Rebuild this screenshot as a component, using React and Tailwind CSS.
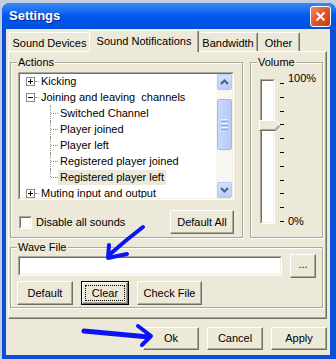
import React from 'react';

const rows = [
  { label: 'Kicking', level: 0, box: '+' },
  { label: 'Joining and leaving  channels', level: 0, box: '-' },
  { label: 'Switched Channel', level: 1 },
  { label: 'Player joined', level: 1 },
  { label: 'Player left', level: 1 },
  { label: 'Registered player joined', level: 1 },
  { label: 'Registered player left', level: 1, last: true, selected: true },
  { label: 'Muting input and output', level: 0, box: '+' },
];

function Sunken({ className = '', children }) {
  return (
    <div className={`border border-t-[#aca899] border-l-[#aca899] border-r-white border-b-white ${className}`}>
      <div className="h-full w-full border border-t-[#716f64] border-l-[#716f64] border-r-[#f1efe2] border-b-[#f1efe2] bg-white">
        {children}
      </div>
    </div>
  );
}

function Btn({ className = '', children }) {
  return (
    <div className={`flex items-center justify-center bg-[#ece9d8] border border-t-white border-l-white border-r-[#716f64] border-b-[#716f64] shadow-[inset_-1px_-1px_0_#aca899] ${className}`}>
      {children}
    </div>
  );
}

function Group({ label, className = '', children }) {
  return (
    <div className={`relative border border-[#aca899] shadow-[inset_1px_1px_0_#fff,1px_1px_0_#fff] ${className}`}>
      <span className="absolute left-[6px] top-[-8px] bg-[#ece9d8] px-[1px] leading-[14px]">{label}</span>
      {children}
    </div>
  );
}

function Expander({ sign }) {
  return (
    <svg width="9" height="9" viewBox="0 0 9 9" className="shrink-0">
      <rect x="0.5" y="0.5" width="8" height="8" fill="#fff" stroke="#8a8a8a" />
      <line x1="2" y1="4.5" x2="7" y2="4.5" stroke="#000" />
      {sign === '+' && <line x1="4.5" y1="2" x2="4.5" y2="7" stroke="#000" />}
    </svg>
  );
}

function TreeRow({ row }) {
  if (row.level === 0) {
    return (
      <div className="flex h-[16px] items-center">
        <div className="w-[6px]" />
        <Expander sign={row.box} />
        <div className="w-[4px] border-t border-dotted border-[#8f8f8f]" />
        <span className="whitespace-pre px-[2px] leading-[16px]">{row.label}</span>
      </div>
    );
  }
  return (
    <div className="flex h-[16px] items-center">
      <div className="w-[30px] self-stretch" />
      <div className={`w-[1px] border-l border-dotted border-[#8f8f8f] ${row.last ? 'h-[8px] self-start' : 'self-stretch'}`} />
      <div className="w-[7px] border-t border-dotted border-[#8f8f8f]" />
      <span className={`whitespace-pre px-[2px] leading-[15px] ${row.selected ? 'bg-[#ece9d8]' : ''}`}>{row.label}</span>
    </div>
  );
}

function ScrollBtn({ up }) {
  return (
    <div className="flex h-[16px] w-[15px] items-center justify-center rounded-[2px] border border-[#b6c9f5] bg-gradient-to-b from-[#d3e0fd] to-[#b9cdf8]">
      <svg width="9" height="6" viewBox="0 0 9 6">
        <polyline
          points={up ? '1,5 4.5,1.5 8,5' : '1,1 4.5,4.5 8,1'}
          fill="none"
          stroke="#4d6185"
          strokeWidth="2"
        />
      </svg>
    </div>
  );
}

function Scrollbar() {
  return (
    <div className="flex h-full w-[16px] flex-col items-end bg-[#f7f7f2]">
      <ScrollBtn up />
      <div className="mt-[9px] flex h-[51px] w-[15px] flex-col items-center justify-center gap-[1px] rounded-[2px] border border-[#9fb8ef] bg-gradient-to-r from-[#c9d8fc] to-[#b7cbf7]">
        <div className="h-[1px] w-[7px] bg-[#eef3fe]" />
        <div className="h-[1px] w-[7px] bg-[#8ca8e6]" />
        <div className="h-[1px] w-[7px] bg-[#eef3fe]" />
        <div className="h-[1px] w-[7px] bg-[#8ca8e6]" />
        <div className="h-[1px] w-[7px] bg-[#eef3fe]" />
        <div className="h-[1px] w-[7px] bg-[#8ca8e6]" />
      </div>
      <div className="mt-auto">
        <ScrollBtn />
      </div>
    </div>
  );
}

function Ticks() {
  const ticks = Array.from({ length: 11 });
  return (
    <div className="ml-[5px] mt-[12px] flex h-[139px] w-[4px] flex-col justify-between">
      {ticks.map((_, i) => (
        <div key={i} className="h-[1px] w-[4px] bg-black" />
      ))}
    </div>
  );
}

export default function App() {
  return (
    <div className="relative h-[359px] w-[336px] overflow-hidden bg-[#c3cde0] font-['Liberation_Sans',Arial,sans-serif] text-[11px] text-black">
      <div className="ml-[2px] mt-[3px] flex h-[356px] w-[334px] flex-col rounded-t-[8px] bg-[#0a4fd8]">
        {/* title bar */}
        <div className="flex h-[26px] items-center justify-between rounded-t-[8px] bg-gradient-to-b from-[#3b8af2] via-[#0058ee] to-[#0050e0] pl-[7px] pr-[5px]">
          <span className="text-[13px] font-bold text-white [text-shadow:1px_1px_0_#0a2d8a]">Settings</span>
          <div className="flex h-[21px] w-[21px] items-center justify-center rounded-[3px] border border-white bg-gradient-to-br from-[#ec8a63] via-[#dc5530] to-[#c23d15]">
            <svg width="11" height="11" viewBox="0 0 11 11">
              <path d="M1.5 1.5 L9.5 9.5 M9.5 1.5 L1.5 9.5" stroke="#fff" strokeWidth="2" />
            </svg>
          </div>
        </div>

        {/* body */}
        <div className="ml-[4px] mr-[6px] mb-[4px] flex flex-1 flex-col bg-[#ece9d8] pt-[1px]">
          {/* tabs */}
          <div className="relative z-10 ml-[3px] flex h-[21px] items-end">
            <div className="h-[19px] w-[80px] rounded-tl-[2px] border-l border-t border-white pt-[3px] text-center leading-[14px]">
              Sound Devices
            </div>
            <div className="-mb-[1px] h-[22px] w-[110px] rounded-t-[2px] border-l border-r border-t border-l-white border-t-white border-r-[#716f64] bg-[#ece9d8] pt-[3px] text-center leading-[14px] shadow-[inset_-1px_0_0_#aca899]">
              Sound Notifications
            </div>
            <div className="h-[19px] w-[59px] rounded-tr-[2px] border-r border-t border-t-white border-r-[#716f64] pt-[3px] text-center leading-[14px] shadow-[inset_-1px_0_0_#aca899]">
              Bandwidth
            </div>
            <div className="h-[19px] w-[42px] rounded-tr-[2px] border-r border-t border-t-white border-r-[#716f64] pt-[3px] text-center leading-[14px] shadow-[inset_-1px_0_0_#aca899]">
              Other
            </div>
          </div>

          {/* tab panel */}
          <div className="ml-[2px] h-[268px] w-[319px] border border-t-white border-l-white border-r-[#716f64] border-b-[#716f64] shadow-[inset_-1px_-1px_0_#aca899]">
            <div className="mt-[10px] flex gap-[7px] pl-[1px]">
              <Group label="Actions" className="h-[176px] w-[233px]">
                <Sunken className="ml-[7px] mt-[9px] h-[128px] w-[216px]">
                  <div className="flex h-full">
                    <div className="-mt-[1px] flex-1 overflow-hidden">
                      {rows.map((r) => (
                        <TreeRow key={r.label} row={r} />
                      ))}
                    </div>
                    <Scrollbar />
                  </div>
                </Sunken>
                <div className="ml-[7px] mt-[10px] flex h-[24px] w-[216px] items-center justify-between">
                  <div className="ml-[1px] flex items-center gap-[4px]">
                    <Sunken className="h-[13px] w-[13px]" />
                    <span>Disable all sounds</span>
                  </div>
                  <Btn className="h-[24px] w-[64px]">Default All</Btn>
                </div>
              </Group>

              <Group label="Volume" className="h-[176px] w-[73px]">
                <div className="ml-[9px] mt-[8px] flex items-start">
                  <div className="relative mt-[8px]">
                    <Sunken className="h-[145px] w-[15px]" />
                    <svg width="22" height="11" viewBox="0 0 22 11" className="absolute left-[-1px] top-[41px]">
                      <polygon points="0.5,0.5 16.5,0.5 21,5.5 16.5,10.5 0.5,10.5" fill="#ece9d8" />
                      <path d="M0.5 10 V0.5 H16.5 L20.5 5" fill="none" stroke="#fff" />
                      <path d="M0.5 10.5 H16.5 L21 5.5" fill="none" stroke="#716f64" />
                      <path d="M1.5 9.5 H16 L19.5 5.5" fill="none" stroke="#aca899" />
                    </svg>
                  </div>
                  <Ticks />
                  <div className="ml-[4px] flex h-[157px] flex-col justify-between leading-[14px]">
                    <span>100%</span>
                    <span>0%</span>
                  </div>
                </div>
              </Group>
            </div>

            <Group label="Wave File" className="ml-[1px] mt-[9px] h-[61px] w-[313px]">
              <div className="ml-[7px] mt-[6px] flex h-[24px] items-center gap-[8px]">
                <Sunken className="h-[20px] w-[264px]" />
                <Btn className="h-[24px] w-[26px] pb-[4px]">...</Btn>
              </div>
              <div className="ml-[6px] mt-[3px] flex gap-[8px]">
                <Btn className="h-[24px] w-[56px]">Default</Btn>
                <div className="h-[24px] w-[48px] border border-black">
                  <Btn className="h-full w-full p-[2px]">
                    <div className="flex h-full w-full items-center justify-center border border-dotted border-black">
                      Clear
                    </div>
                  </Btn>
                </div>
                <Btn className="h-[24px] w-[65px]">Check File</Btn>
              </div>
            </Group>
          </div>

          {/* dialog buttons */}
          <div className="mt-[8px] flex justify-end gap-[8px] pr-[3px]">
            <Btn className="h-[23px] w-[56px]">Ok</Btn>
            <Btn className="h-[23px] w-[56px]">Cancel</Btn>
            <Btn className="h-[23px] w-[56px]">Apply</Btn>
          </div>
        </div>
      </div>

      {/* hand-drawn annotation arrows */}
      <svg width="336" height="359" className="pointer-events-none absolute left-0 top-0">
        <g fill="none" stroke="#0a14f5" strokeWidth="4" strokeLinecap="round" strokeLinejoin="round">
          <path d="M143 227 Q126 240 109 255" />
          <path d="M109 245 L108 258 L127 254" />
          <path d="M84 331 Q116 334 149 337" strokeWidth="5" />
          <path d="M138 326 L151 336 L142 345" />
        </g>
      </svg>
    </div>
  );
}
